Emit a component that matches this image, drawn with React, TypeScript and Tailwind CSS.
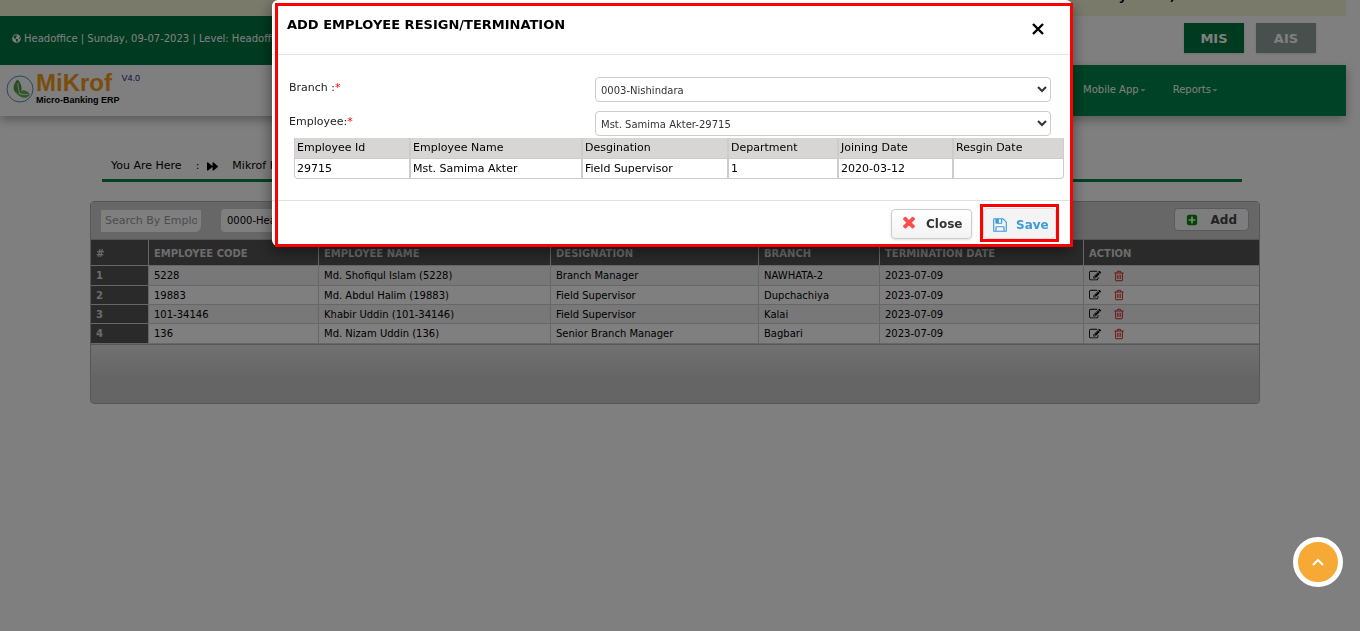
import React from "react";
import { FaGlobeAmericas, FaForward, FaCaretDown } from "react-icons/fa";

const TIMES =
  "M1490 1322q0 40-28 68l-136 136q-28 28-68 28t-68-28l-294-294-294 294q-28 28-68 28t-68-28l-136-136q-28-28-28-68t28-68l294-294-294-294q-28-28-28-68t28-68l136-136q28-28 68-28t68 28l294 294 294-294q28-28 68-28t68 28l136 136q28 28 28 68t-28 68l-294 294 294 294q28 28 28 68z";
const FLOPPY =
  "M512 1536h768v-384h-768v384zm896 0h128v-896q0-14-10-38.5t-20-34.5l-281-281q-10-10-34-20t-39-10v416q0 40-28 68t-68 28h-576q-40 0-68-28t-28-68v-416h-128v1280h128v-416q0-40 28-68t68-28h832q40 0 68 28t28 68v416zm-384-928v-320q0-13-9.5-22.5t-22.5-9.5h-192q-13 0-22.5 9.5t-9.5 22.5v320q0 13 9.5 22.5t22.5 9.5h192q13 0 22.5-9.5t9.5-22.5zm640 32v928q0 40-28 68t-68 28h-1344q-40 0-68-28t-28-68v-1344q0-40 28-68t68-28h928q40 0 88 20t76 48l280 280q28 28 48 76t20 88z";
const EDIT =
  "M888 1184l116-116-152-152-116 116v56h96v96h56zm440-720q-16-16-33 1l-350 350q-17 17-1 33t33-1l350-350q17-17 1-33zm80 594v190q0 119-84.5 203.5t-203.5 84.5h-832q-119 0-203.5-84.5t-84.5-203.5v-832q0-119 84.5-203.5t203.5-84.5h832q63 0 117 25 15 7 18 23 3 17-9 29l-49 49q-14 14-32 8-23-6-45-6h-832q-66 0-113 47t-47 113v832q0 66 47 113t113 47h832q66 0 113-47t47-113v-126q0-13 9-22l64-64q15-15 35-7t20 29zm-96-738l288 288-672 672h-288v-288zm444 132l-92 92-288-288 92-92q28-28 68-28t68 28l152 152q28 28 28 68t-28 68z";
const TRASH =
  "M704 736v576q0 14-9 23t-23 9h-64q-14 0-23-9t-9-23v-576q0-14 9-23t23-9h64q14 0 23 9t9 23zm256 0v576q0 14-9 23t-23 9h-64q-14 0-23-9t-9-23v-576q0-14 9-23t23-9h64q14 0 23 9t9 23zm256 0v576q0 14-9 23t-23 9h-64q-14 0-23-9t-9-23v-576q0-14 9-23t23-9h64q14 0 23 9t9 23zm128 724v-948h-896v948q0 22 7 40.5t14.5 27 10.5 8.5h832q3 0 10.5-8.5t14.5-27 7-40.5zm-672-1076h448l-48-117q-7-9-17-11h-317q-10 2-17 11zm928 32v64q0 14-9 23t-23 9h-96v948q0 83-47 143.5t-113 60.5h-832q-66 0-113-58.5t-47-141.5v-952h-96q-14 0-23-9t-9-23v-64q0-14 9-23t23-9h309l70-167q15-37 54-63t79-26h320q40 0 79 26t54 63l70 167h309q14 0 23 9t9 23z";
const PLUS =
  "M1408 960v-128q0-26-19-45t-45-19h-320v-320q0-26-19-45t-45-19h-128q-26 0-45 19t-19 45v320h-320q-26 0-45 19t-19 45v128q0 26 19 45t45 19h320v320q0 26 19 45t45 19h128q26 0 45-19t19-45v-320h320q26 0 45-19t19-45zm256-544v960q0 119-84.5 203.5t-203.5 84.5h-960q-119 0-203.5-84.5t-84.5-203.5v-960q0-119 84.5-203.5t203.5-84.5h960q119 0 203.5 84.5t84.5 203.5z";

function Glyph({ d, className }: { d: string; className: string }) {
  return (
    <svg viewBox="0 0 1792 1792" fill="currentColor" className={className} aria-hidden="true">
      <path d={d} />
    </svg>
  );
}

function Logo() {
  return (
    <a href="#" className="flex items-start gap-[2px] pl-[6px] pt-[6px]">
      <svg viewBox="0 0 28 28" className="mt-1 h-7 w-7" aria-hidden="true">
        <circle cx="14" cy="14" r="13" fill="none" stroke="#4c8fc0" strokeWidth="1" />
        <path d="M11.500 4.500C7.500 8.500 6.500 13.500 9 17L14 19C17 14.500 15.500 8.500 11.500 4.500Z" fill="#4f9a45" />
        <path d="M14 19C14.500 15 18.500 13.500 23.500 18.500C24 21.500 20.500 23.500 17 22.500C14.500 22 12 20.500 9 17Z" fill="#63b254" />
        <path d="M14 19C12.500 15 12 11 11.800 8M14 19C17 19.500 19.500 19.800 22 19.500" fill="none" stroke="#ffffff" strokeWidth="0.8" />
      </svg>
      <span className="flex flex-col font-[Liberation_Sans,sans-serif] font-bold">
        <span className="text-2xl leading-6 text-[#f19a1c]">MiKrof</span>
        <span className="text-[9px] leading-[10px] text-black">Micro-Banking ERP</span>
      </span>
      <span className="pt-[2px] font-[Liberation_Sans,sans-serif] text-[9px] leading-[10px] text-[#20208a]">V4.0</span>
    </a>
  );
}

const columns = [
  { title: "#", width: "w-[58px]" },
  { title: "EMPLOYEE CODE", width: "w-[170px]" },
  { title: "EMPLOYEE NAME", width: "w-[232px]" },
  { title: "DESIGNATION", width: "w-[208px]" },
  { title: "BRANCH", width: "w-[121px]" },
  { title: "TERMINATION DATE", width: "w-[204px]" },
  { title: "ACTION", width: "w-auto" },
];

const rows = [
  ["5228", "Md. Shofiqul Islam (5228)", "Branch Manager", "NAWHATA-2", "2023-07-09"],
  ["19883", "Md. Abdul Halim (19883)", "Field Supervisor", "Dupchachiya", "2023-07-09"],
  ["101-34146", "Khabir Uddin (101-34146)", "Field Supervisor", "Kalai", "2023-07-09"],
  ["136", "Md. Nizam Uddin (136)", "Senior Branch Manager", "Bagbari", "2023-07-09"],
];

function Page() {
  return (
    <div>
      <header className="pr-[14px]">
        <div className="flex h-4 justify-end gap-[43px] overflow-hidden bg-[#f5f5d7] pr-[171px] text-[13px] leading-4 font-bold text-black">
          <span className="-mt-3">y</span>
          <span className="-mt-3">,</span>
        </div>
        <div className="flex justify-between">
          <div className="flex h-[49px] w-1/2 items-center gap-[3px] bg-[#007542] pb-1 pl-3 text-[10px] text-white">
            <FaGlobeAmericas className="h-[9px] w-[9px]" />
            <span>Headoffice | Sunday, 09-07-2023 | Level: Headoffice</span>
          </div>
          <div className="flex gap-3 pt-[7px] pr-[30px]">
            <button className="h-[30px] w-[60px] bg-[#007542] pt-[2px] text-[13px] font-bold text-white shadow">MIS</button>
            <button className="h-[30px] w-[60px] bg-[#8fa199] pt-[2px] text-[13px] font-bold text-white shadow">AIS</button>
          </div>
        </div>
        <div className="flex h-[51px] shadow-[0_4px_10px_rgba(0,0,0,0.3)]">
          <div className="w-[30%]">
            <Logo />
          </div>
          <nav className="flex flex-1 items-center justify-end gap-[26px] bg-[#00844a] pr-[127px] pb-[2px] text-[10px] text-white">
            <a href="#" className="flex items-center">
              Mobile App
              <FaCaretDown className="h-2 w-2 text-[#a9cdbb]" />
            </a>
            <a href="#" className="flex items-center">
              Reports
              <FaCaretDown className="h-2 w-2 text-[#a9cdbb]" />
            </a>
          </nav>
        </div>
      </header>

      <main className="mt-9 pr-[10px]">
        <div className="mx-auto max-w-[1170px]">
          <div className="mr-[18px] ml-3 flex h-[30px] items-center border-b-3 border-[#00844a] pt-[2px] pl-[9px] text-[11px] text-black">
            <span>You Are Here</span>
            <span className="pr-2 pl-[14px]">:</span>
            <FaForward className="h-[11px] w-[11px]" />
            <span className="pl-[14px]">Mikrof HRM</span>
          </div>

          <section className="mt-[19px] rounded border border-[#adadad] bg-[#cfcfcf]">
            <div className="flex h-[38px] items-center justify-between border-b border-[#adadad] bg-[#cecece] pr-[10px] pb-[2px] pl-[10px]">
              <div className="flex items-center gap-5 pt-[2px]">
                <input
                  aria-label="Search by employee"
                  placeholder="Search By Employee"
                  className="h-[22px] w-[100px] rounded-br-md bg-white px-1 text-[11px] placeholder:text-[#999]"
                />
                <select aria-label="Office" className="h-[23px] w-40 rounded border-0 bg-white pl-[2px] text-[10px] text-black">
                  <option>0000-Headoffice</option>
                </select>
              </div>
              <button className="flex h-[23px] items-center gap-[13px] rounded border border-[#b5b5b5] bg-[#fbfbfb] px-[11px] text-xs font-bold text-[#444]">
                <Glyph d={PLUS} className="h-3 w-3 text-[#008a00]" />
                Add
              </button>
            </div>
            <table className="w-full table-fixed border-separate border-spacing-0 text-left text-[10px] text-black">
              <thead>
                <tr className="h-[26px] bg-[#545454] text-[10px] text-[#d8d8d8]">
                  {columns.map((c) => (
                    <th key={c.title} className={`${c.width} border-r border-b border-[#cfcfcf] px-[5px] pt-[2px] pb-0 font-bold last:border-r-0`}>
                      {c.title}
                    </th>
                  ))}
                </tr>
              </thead>
              <tbody>
                {rows.map((r, i) => (
                  <tr key={r[0]} className="h-[19px] odd:bg-[#f1f1f1] even:bg-white first:h-5 last:h-5">
                    <th className="border-r border-b border-[#cfcfcf] bg-[#545454] px-[5px] py-0 font-bold text-[#d8d8d8]">{i + 1}</th>
                    {r.map((v, j) => (
                      <td key={j} className="border-r border-b border-[#cfcfcf] px-[5px] py-0">
                        {v}
                      </td>
                    ))}
                    <td className="border-b border-[#cfcfcf] px-[5px] py-0">
                      <div className="flex items-center gap-3">
                        <button aria-label="Edit">
                          <Glyph d={EDIT} className="h-3 w-3 text-black" />
                        </button>
                        <button aria-label="Delete">
                          <Glyph d={TRASH} className="h-3 w-3 text-[#e02424]" />
                        </button>
                      </div>
                    </td>
                  </tr>
                ))}
              </tbody>
            </table>
            <div className="h-[59px] rounded-b border-t border-[#adadad] bg-linear-to-b from-[#e2e2e2] to-[#cacaca] to-60%" />
          </section>
        </div>
      </main>
    </div>
  );
}

const details = [
  { label: "Employee Id", value: "29715", width: "w-[116px]" },
  { label: "Employee Name", value: "Mst. Samima Akter", width: "w-[172px]" },
  { label: "Desgination", value: "Field Supervisor", width: "w-[146px]" },
  { label: "Department", value: "1", width: "w-[110px]" },
  { label: "Joining Date", value: "2020-03-12", width: "w-[115px]" },
  { label: "Resgin Date", value: "", width: "w-auto" },
];

function Field({ id, label, value }: { id: string; label: string; value: string }) {
  return (
    <div className="flex items-start justify-between gap-4 text-[11px]">
      <label htmlFor={id} className="pt-[3px] text-[#222]">
        {label}
        <span className="text-[#ff0000]">*</span>
      </label>
      <select id={id} className="h-[25px] w-[456px] rounded border border-[#ccc] bg-white pt-[2px] pl-[1px] text-[10px] text-[#333]">
        <option>{value}</option>
      </select>
    </div>
  );
}

function ResignDialog() {
  return (
    <div className="fixed inset-0 flex items-start justify-center bg-black/50 pr-4">
      <div role="dialog" aria-labelledby="dialog-title" className="relative w-full max-w-[800px] rounded-md bg-white shadow-[0_5px_15px_rgba(0,0,0,0.5)]">
        <div className="flex h-[55px] items-start justify-between border-b border-[#e5e5e5] pt-[17px] pr-[28px] pl-[15px]">
          <h1 id="dialog-title" className="text-[13px] leading-4 font-bold text-black">
            ADD EMPLOYEE RESIGN/TERMINATION
          </h1>
          <button aria-label="Dismiss" className="pt-[6px]">
            <svg viewBox="0 0 12 12" className="h-3 w-3" fill="none" stroke="#000" strokeWidth="2.400" aria-hidden="true">
              <path d="M1 1L11 11M11 1L1 11" />
            </svg>
          </button>
        </div>
        <div className="pt-[22px] pb-[21px]">
          <div className="flex flex-col gap-[9px] pr-[21px] pl-[17px]">
            <Field id="branch" label="Branch :" value="0003-Nishindara" />
            <Field id="employee" label="Employee:" value="Mst. Samima Akter-29715" />
          </div>
          <div className="mt-[2px] mr-2 ml-[22px]">
            <table className="w-full table-fixed border-separate border-spacing-0 overflow-hidden rounded-b border border-t-0 border-[#ccc] text-left text-[11px] text-black">
              <thead>
                <tr className="h-[21px] bg-[#d8d6d4]">
                  {details.map((d) => (
                    <th key={d.label} className={`${d.width} border-r-2 border-b border-[#ccc] px-[2px] pt-[1px] pb-0 font-normal last:border-r-0`}>
                      {d.label}
                    </th>
                  ))}
                </tr>
              </thead>
              <tbody>
                <tr className="h-[19px]">
                  {details.map((d) => (
                    <td key={d.label} className="border-r-2 border-[#ccc] px-[2px] pt-[2px] pb-0 last:border-r-0">
                      {d.value}
                    </td>
                  ))}
                </tr>
              </tbody>
            </table>
          </div>
        </div>
        <div className="flex items-start justify-end gap-2 border-t border-[#e0e0e5] pt-[3px] pr-[13px] pb-1 text-xs font-bold">
          <button className="mt-[5px] flex h-[30px] w-[81px] items-center gap-2 rounded border border-[#ccc] bg-linear-to-b from-white to-[#f3f3f3] pl-2 text-[#333] shadow-sm">
            <Glyph d={TIMES} className="mb-1 h-[18px] w-[18px] text-[#ff4d4d]" />
            Close
          </button>
          <div className="border-3 border-[#ff0000]">
            <button className="mt-[1px] flex h-[31px] w-[73px] items-center gap-2 rounded border border-[#ddd] bg-[#f4f4f4] pt-[2px] pl-2 text-[#3c9bdb]">
              <Glyph d={FLOPPY} className="h-4 w-4" />
              Save
            </button>
          </div>
        </div>
        <div className="pointer-events-none absolute top-[3px] right-[-1px] bottom-[-1px] left-[3px] border-3 border-[#ff0000]" />
      </div>
    </div>
  );
}

export default function App() {
  return (
    <div className="min-h-screen bg-white font-[Verdana,DejaVu_Sans,sans-serif]">
      <Page />
      <ResignDialog />
      <button
        aria-label="Back to top"
        className="fixed right-[17px] bottom-11 flex h-[50px] w-[50px] items-center justify-center rounded-full border-5 border-white bg-[#f7a935]"
      >
        <svg viewBox="0 0 12 8" className="h-2 w-3" fill="none" stroke="#fff" strokeWidth="2" aria-hidden="true">
          <path d="M1 7L6 2L11 7" />
        </svg>
      </button>
    </div>
  );
}
